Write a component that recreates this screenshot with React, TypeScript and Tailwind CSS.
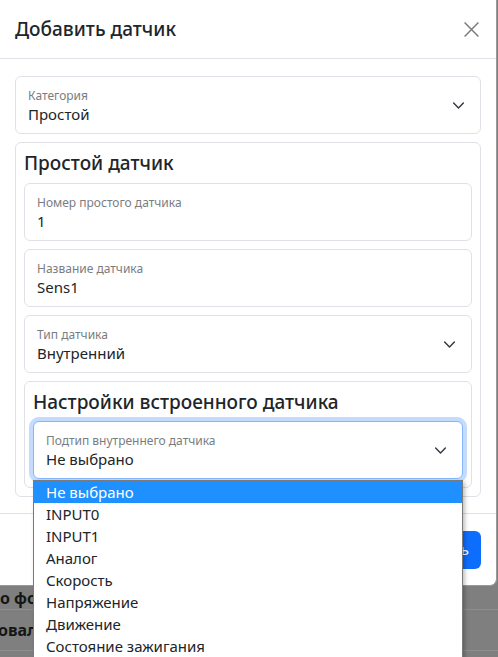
import React from "react";

const Chevron: React.FC = () => (
  <svg width="13" height="13" viewBox="0 0 16 16" className="shrink-0">
    <path
      d="M2 5l6 6 6-6"
      fill="none"
      stroke="#343a40"
      strokeWidth="1.8"
      strokeLinecap="round"
      strokeLinejoin="round"
    />
  </svg>
);

interface FieldProps {
  label: string;
  value: string;
  select?: boolean;
  focused?: boolean;
}

const Field: React.FC<FieldProps> = ({ label, value, select, focused }) => (
  <div
    className={
      focused
        ? "flex h-[58px] rounded-[6px] border border-[#86b7fe] shadow-[0_0_0_4px_rgba(13,110,253,0.25)] pl-[12px] pr-[15px] bg-white"
        : "flex h-[58px] rounded-[6px] border border-[#dee2e6] pl-[12px] pr-[15px] bg-white"
    }
  >
    <div className="flex-1 flex flex-col pt-[10px]">
      <span className="text-[12px] leading-[17px] text-[#7a7d80]">{label}</span>
      <span className="text-[15px] leading-[20px] text-[#212529]">{value}</span>
    </div>
    {select && (
      <div className="flex items-center">
        <Chevron />
      </div>
    )}
  </div>
);

const options = [
  "Не выбрано",
  "INPUT0",
  "INPUT1",
  "Аналог",
  "Скорость",
  "Напряжение",
  "Движение",
  "Состояние зажигания",
];

export default function App() {
  return (
    <div className="relative w-[498px] h-[657px] overflow-hidden bg-[#7f7f7f] font-['Noto_Sans',sans-serif] text-[#212529]">
      {/* modal */}
      <div className="w-[497px] bg-white border-r border-b border-[#9a9a9a] rounded-br-[7px]">
        <div className="flex items-center justify-between h-[59px] px-[15px] border-b border-[#dee2e6]">
          <h1 className="text-[19px] font-medium leading-[24px]">Добавить датчик</h1>
          <svg width="17" height="17" viewBox="0 0 16 16" className="mr-[1px]">
            <path d="M1.5 1.5l13 13M14.5 1.5l-13 13" stroke="#7b7b7b" strokeWidth="1.4" fill="none" />
          </svg>
        </div>

        <div className="px-[15px] pt-[17px] pb-[16px]">
          <Field label="Категория" value="Простой" select />

          <div className="mt-[8px] rounded-[6px] border border-[#dee2e6] p-[8px]">
            <h2 className="text-[19px] font-medium leading-[24px] pb-[8px]">Простой датчик</h2>
            <div className="flex flex-col gap-[8px]">
              <Field label="Номер простого датчика" value="1" />
              <Field label="Название датчика" value="Sens1" />
              <Field label="Тип датчика" value="Внутренний" select />
              <div className="rounded-[6px] border border-[#dee2e6] p-[8px]">
                <h3 className="text-[19px] font-medium leading-[24px] pb-[7px]">
                  Настройки встроенного датчика
                </h3>
                <Field label="Подтип внутреннего датчика" value="Не выбрано" select focused />
              </div>
            </div>
          </div>
        </div>

        <div className="flex justify-end items-center h-[72px] px-[15px] border-t border-[#dee2e6]">
          <button className="h-[38px] px-[12px] rounded-[6px] bg-[#0d6efd] text-white text-[15px]">
            Добавить
          </button>
        </div>
      </div>

      {/* page behind the backdrop */}
      <div className="text-[16px] font-bold text-[#161616]">
        <div className="h-[24px] flex items-center border-b border-[#8e8e8e] whitespace-nowrap">о фото</div>
        <div className="h-[41px] flex items-center border-b border-[#8e8e8e] -ml-[2px] whitespace-nowrap">овал</div>
      </div>

      {/* native select popup */}
      <ul className="absolute left-[33px] top-[480px] w-[430px] bg-white border border-[#7a7a7a] shadow-[2px_2px_4px_rgba(0,0,0,0.25)]">
        {options.map((o, i) => (
          <li
            key={o}
            className={
              i === 0
                ? "h-[22px] leading-[22px] pl-[12px] text-[15px] bg-[#1e90ff] text-white"
                : "h-[22px] leading-[22px] pl-[12px] text-[15px] text-[#212529]"
            }
          >
            {o}
          </li>
        ))}
      </ul>
    </div>
  );
}
